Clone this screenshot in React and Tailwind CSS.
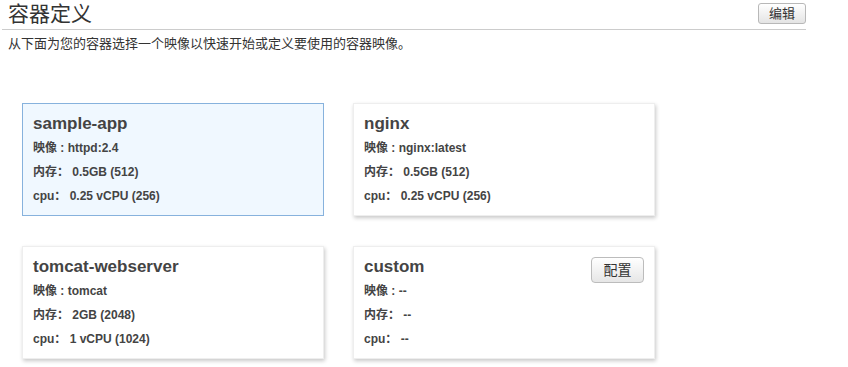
export default function App() {
  const cards = [
    { name: "sample-app", image: "httpd:2.4", mem: "0.5GB (512)", cpu: "0.25 vCPU (256)", selected: true },
    { name: "nginx", image: "nginx:latest", mem: "0.5GB (512)", cpu: "0.25 vCPU (256)" },
    { name: "tomcat-webserver", image: "tomcat", mem: "2GB (2048)", cpu: "1 vCPU (1024)" },
    { name: "custom", image: "--", mem: "--", cpu: "--", config: true },
  ];
  return (
    <div
      className="w-[848px] h-[367px] bg-white text-[#333]"
      style={{ fontFamily: '"Liberation Sans", Arial, "Noto Sans CJK SC", sans-serif' }}
    >
      <div className="w-[806px] pl-[2px]">
        <div className="flex items-start justify-between border-b border-[#cccccc] h-[30px]">
          <h1 className="pl-[6px] text-[21px] leading-[26px] font-normal text-[#333] pt-[1px]">容器定义</h1>
          <button className="mt-[3px] w-[48px] h-[21px] rounded-[3px] border border-[#b8b8b8] bg-gradient-to-b from-[#ffffff] to-[#e4e4e4] text-[13px] leading-[19px] text-[#333]">
            编辑
          </button>
        </div>
      </div>
      <p className="pl-[8px] mt-[6px] text-[13px] leading-[16px] text-[#333]">
        从下面为您的容器选择一个映像以快速开始或定义要使用的容器映像。
      </p>
      <div className="ml-[22px] mt-[51px] grid grid-cols-[302px_302px] gap-x-[29px] gap-y-[30px]">
        {cards.map((c) => (
          <div
            key={c.name}
            className={
              "h-[113px] px-[10px] pt-[9px] pb-[9px] border " +
              (c.selected
                ? "bg-[#f0f8ff] border-[#87b2dd]"
                : "bg-white border-[#eeeeee] shadow-[1px_2px_4px_rgba(0,0,0,0.22)]")
            }
          >
            <div className="flex items-start justify-between">
              <div>
                <div className="text-[17px] leading-[22px] font-bold text-[#444]">{c.name}</div>
                <div className="mt-[1px] text-[12px] leading-[24px] font-bold text-[#444]">
                  <div>映像 : {c.image}</div>
                  <div>内存： {c.mem}</div>
                  <div>cpu： {c.cpu}</div>
                </div>
              </div>
              {c.config && (
                <button className="mt-[1px] w-[53px] h-[26px] rounded-[4px] border border-[#bcbcbc] bg-gradient-to-b from-[#ffffff] to-[#e6e6e6] text-[14px] leading-[24px] text-[#333]">
                  配置
                </button>
              )}
            </div>
          </div>
        ))}
      </div>
    </div>
  );
}
